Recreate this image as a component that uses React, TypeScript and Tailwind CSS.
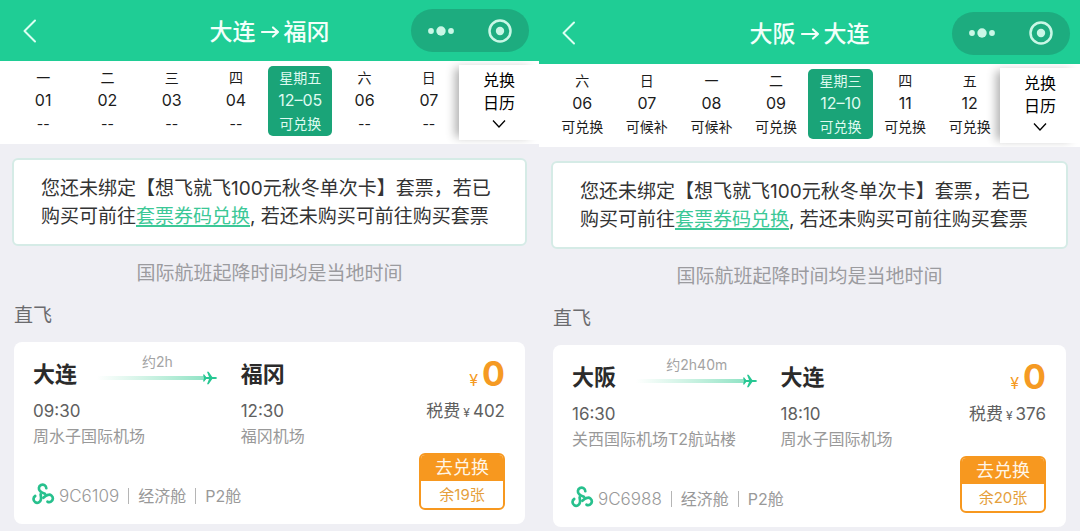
import React from "react";

type Day = { week: string; date: string; status: string; active?: boolean };
type Trip = {
  from: string;
  to: string;
  days: Day[];
  duration: string;
  depart: string;
  arrive: string;
  departAirport: string;
  arriveAirport: string;
  tax: string;
  flight: string;
  left: string;
};

const trips: Trip[] = [
  {
    from: "大连",
    to: "福冈",
    days: [
      { week: "一", date: "01", status: "--" },
      { week: "二", date: "02", status: "--" },
      { week: "三", date: "03", status: "--" },
      { week: "四", date: "04", status: "--" },
      { week: "星期五", date: "12–05", status: "可兑换", active: true },
      { week: "六", date: "06", status: "--" },
      { week: "日", date: "07", status: "--" },
    ],
    duration: "约2h",
    depart: "09:30",
    arrive: "12:30",
    departAirport: "周水子国际机场",
    arriveAirport: "福冈机场",
    tax: "402",
    flight: "9C6109",
    left: "余19张",
  },
  {
    from: "大阪",
    to: "大连",
    days: [
      { week: "六", date: "06", status: "可兑换" },
      { week: "日", date: "07", status: "可候补" },
      { week: "一", date: "08", status: "可候补" },
      { week: "二", date: "09", status: "可兑换" },
      { week: "星期三", date: "12–10", status: "可兑换", active: true },
      { week: "四", date: "11", status: "可兑换" },
      { week: "五", date: "12", status: "可兑换" },
    ],
    duration: "约2h40m",
    depart: "16:30",
    arrive: "18:10",
    departAirport: "关西国际机场T2航站楼",
    arriveAirport: "周水子国际机场",
    tax: "376",
    flight: "9C6988",
    left: "余20张",
  },
];

function Header({ trip, tall }: { trip: Trip; tall: boolean }) {
  return (
    <header
      className={`grid grid-cols-[1fr_auto_1fr] items-center bg-[#1fcd95] px-2.5 text-white ${tall ? "h-16 pt-0.5" : "h-[61px]"}`}
    >
      <button type="button" aria-label="返回" className="ml-2.5 w-5">
        <svg viewBox="0 0 20 26" className="h-[26px] w-5" fill="none" stroke="#dcfff2" strokeWidth="2" strokeLinecap="round" strokeLinejoin="round">
          <path d="M15 2.500 4.500 13 15 23.500" />
        </svg>
      </button>
      <h1 className="flex items-center gap-1 pt-0.5 text-[23px] leading-8 font-medium text-[#f2fffa]">
        <span>{trip.from}</span>
        <svg viewBox="0 0 20 16" className="h-4 w-5" fill="none" stroke="currentColor" strokeWidth="2.200" strokeLinecap="round" strokeLinejoin="round">
          <path d="M2 8H18M13 3.500 18 8l-5 4.500" />
        </svg>
        <span>{trip.to}</span>
      </h1>
      <div className="flex h-[43px] w-[118px] items-center justify-self-end rounded-full bg-[#1dac7f]">
        <button type="button" aria-label="更多" className="flex flex-1 justify-center">
          <svg viewBox="0 0 28 12" className="h-3 w-7" fill="#c9f7e6">
            <circle cx="4" cy="6" r="2.900" />
            <circle cx="14" cy="6" r="4.700" />
            <circle cx="24" cy="6" r="2.900" />
          </svg>
        </button>
        <button type="button" aria-label="关闭" className="flex flex-1 justify-center">
          <svg viewBox="0 0 24 24" className="size-6" fill="none">
            <circle cx="12" cy="12" r="10.500" stroke="#c9f7e6" strokeWidth="2.500" />
            <circle cx="12" cy="12" r="4.200" fill="#c9f7e6" />
          </svg>
        </button>
      </div>
    </header>
  );
}

function DateStrip({ days }: { days: Day[] }) {
  return (
    <nav className="flex h-[83px] overflow-hidden bg-white pl-[11px] text-[#1c1c1c]">
      <div className="grid min-w-0 flex-1 grid-cols-7 pt-[5px]">
        {days.map((d) => (
          <button
            key={d.date}
            type="button"
            className={`flex h-[70px] flex-col items-center rounded-[5px] text-sm leading-[23px] whitespace-nowrap ${d.active ? "bg-[#1aa478] text-[#dffaf0]" : ""}`}
          >
            <span>{d.week}</span>
            <span className="text-base leading-[23px]">{d.date}</span>
            <span className="leading-6">{d.status}</span>
          </button>
        ))}
      </div>
      <button
        type="button"
        className="my-1 -ml-0.5 flex w-20 flex-col items-center bg-white pt-1 text-base leading-[23px] text-black shadow-[-7px_0_9px_-3px_rgba(0,0,0,0.3)]"
      >
        <span>兑换</span>
        <span>日历</span>
        <svg viewBox="0 0 16 10" className="mt-1 h-2.5 w-4" fill="none" stroke="currentColor" strokeWidth="1.300">
          <path d="M2 1.500 8 8l6-6.500" />
        </svg>
      </button>
    </nav>
  );
}

function FlightLine({ duration }: { duration: string }) {
  return (
    <div className="mr-[23px] ml-5 flex h-7 flex-1 flex-col items-center">
      <span className="-mt-2 text-sm leading-[19px] text-[#a3a3a3]">{duration}</span>
      <div className="flex w-full items-center">
        <div className="h-1 flex-1 bg-linear-to-r from-white to-[#8fe3c5]" />
        <svg viewBox="0 0 16 14" className="-ml-1 h-3.5 w-4" fill="#27c793">
          <path d="M1 3.500h1.300L4 6h3L5 .8h1.600L10.300 6h3.200q1.700.3 1.700 1t-1.700 1h-3.200l-3.700 5.200H5L7 8H4l-1.700 2.500H1L2 7z" />
        </svg>
      </div>
    </div>
  );
}

function AirlineLogo() {
  const arm = "M13.300 4.200A3.700 3.700 0 1 0 7.200 7.200Q8.600 8.600 12 9.700";
  return (
    <svg viewBox="0 0 20 20" className="mb-1 size-5 overflow-visible" fill="none" stroke="#27c08d" strokeWidth="2.700" strokeLinecap="round">
      <path d={arm} />
      <path d={arm} transform="rotate(120 10 11.300)" />
      <path d={arm} transform="rotate(240 10 11.300)" />
    </svg>
  );
}

function FlightCard({ trip }: { trip: Trip }) {
  return (
    <article className="mx-3.5 rounded-lg bg-white pt-[18px] pr-5 pb-3.5 pl-[19px]">
      <div className="grid grid-cols-[11fr_14fr]">
        <div>
          <div className="flex">
            <h2 className="text-[22px] leading-7 font-bold text-[#2b2b2b]">{trip.from}</h2>
            <FlightLine duration={trip.duration} />
          </div>
          <p className="mt-[11px] text-[17px] leading-6 text-[#606060]">{trip.depart}</p>
          <p className="mt-px text-base leading-6 text-[#999]">{trip.departAirport}</p>
        </div>
        <div className="flex justify-between">
          <div>
            <h2 className="text-[22px] leading-7 font-bold text-[#2b2b2b]">{trip.to}</h2>
            <p className="mt-[11px] text-[17px] leading-6 text-[#606060]">{trip.arrive}</p>
            <p className="mt-px text-base leading-6 text-[#999]">{trip.arriveAirport}</p>
          </div>
          <div className="text-right">
            <p className="flex h-7 items-baseline justify-end gap-1 leading-7 text-[#f59a23]">
              <span className="text-base leading-6">¥</span>
              <span className="text-[34px] leading-7 font-bold">0</span>
            </p>
            <p className="mt-[11px] text-[17px] leading-6 text-[#606060]">
              税费
              <span className="mx-[3px] text-xs">¥</span>
              {trip.tax}
            </p>
          </div>
        </div>
      </div>
      <div className="mt-[5px] flex items-end justify-between">
        <div className="flex items-center gap-[9px] pb-0.5 text-base leading-6 text-[#999]">
          <span className="flex items-center gap-1.5">
            <AirlineLogo />
            <span className="text-[17px] font-light">{trip.flight}</span>
          </span>
          <span className="h-4 w-px bg-[#b5b5b5]" />
          <span>经济舱</span>
          <span className="h-4 w-px bg-[#b5b5b5]" />
          <span>P2舱</span>
        </div>
        <button type="button" className="flex w-[86px] flex-col overflow-hidden rounded-md border-2 border-[#f7981f] text-center">
          <span className="bg-[#f7981f] text-lg leading-[26px] text-[#fff5e6]">去兑换</span>
          <span className="text-[15px] leading-[27px] text-[#e5a03c]">{trip.left}</span>
        </button>
      </div>
    </article>
  );
}

function Screen({ trip, tall }: { trip: Trip; tall: boolean }) {
  return (
    <section className="min-w-0 bg-[#efeff4]">
      <Header trip={trip} tall={tall} />
      <DateStrip days={trip.days} />
      <div className="mx-3 mt-3.5 rounded-md border-2 border-[#d5ebe6] bg-white px-[27px] pt-[15px] pb-[13px] text-[19px] leading-7 text-[#333]">
        您还未绑定【想飞就飞100元秋冬单次卡】套票，若已购买可前往
        <a href="#voucher" className="text-[#3cc897] underline decoration-2 underline-offset-2">
          套票券码兑换
        </a>
        , 若还未购买可前往购买套票
      </div>
      <p className="mt-3.5 text-center text-[19px] leading-7 text-[#9b9b9f]">国际航班起降时间均是当地时间</p>
      <h2 className="mt-3.5 mb-3 pl-3.5 text-[19px] leading-7 text-[#6b6b6e]">直飞</h2>
      <FlightCard trip={trip} />
    </section>
  );
}

export default function App() {
  return (
    <main className="grid min-h-screen grid-cols-[539fr_541fr] bg-[#efeff4] font-[Inter,'Noto_Sans_CJK_SC',sans-serif]">
      {trips.map((trip, i) => (
        <Screen key={trip.flight} trip={trip} tall={i === 1} />
      ))}
    </main>
  );
}
